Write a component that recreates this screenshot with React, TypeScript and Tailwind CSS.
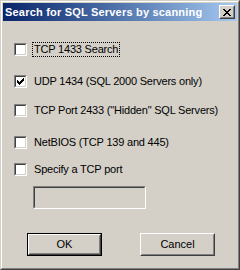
import React from "react";

const labels = [
  "TCP 1433 Search",
  "UDP 1434 (SQL 2000 Servers only)",
  "TCP Port 2433 (\"Hidden\" SQL Servers)",
  "NetBIOS (TCP 139 and 445)",
  "Specify a TCP port",
];

function CheckMark() {
  const px: [number, number][] = [
    [6, 0],
    [5, 1], [6, 1],
    [0, 2], [4, 2], [5, 2], [6, 2],
    [0, 3], [1, 3], [3, 3], [4, 3], [5, 3],
    [0, 4], [1, 4], [2, 4], [3, 4], [4, 4],
    [1, 5], [2, 5], [3, 5],
    [2, 6],
  ];
  return (
    <svg width="7" height="7" viewBox="0 0 7 7" shapeRendering="crispEdges">
      {px.map(([x, y]) => (
        <rect key={`${x}-${y}`} x={x} y={y} width="1" height="1" fill="#000" />
      ))}
    </svg>
  );
}

function Checkbox({ checked }: { checked?: boolean }) {
  return (
    <div className="w-[13px] h-[13px] shrink-0 border border-t-[#808080] border-l-[#808080] border-b-white border-r-white">
      <div className="w-full h-full border border-t-[#404040] border-l-[#404040] border-b-[#d4d0c8] border-r-[#d4d0c8] bg-white flex items-center justify-center">
        {checked && <CheckMark />}
      </div>
    </div>
  );
}

function Row({ label, checked, focused, className }: { label: string; checked?: boolean; focused?: boolean; className: string }) {
  return (
    <div className={`flex items-center h-[13px] ml-[11px] ${className}`}>
      <Checkbox checked={checked} />
      <span
        className={`ml-[5px] px-[1px] leading-[13px] whitespace-nowrap tracking-[-0.2px] ${
          focused ? "border border-dotted border-black" : "border border-transparent"
        }`}
      >
        {label}
      </span>
    </div>
  );
}

function Button({ label, isDefault }: { label: string; isDefault?: boolean }) {
  return (
    <div className={`w-[75px] h-[23px] ${isDefault ? "border border-black" : ""}`}>
      <div className="w-full h-full border border-t-white border-l-white border-b-[#404040] border-r-[#404040]">
        <div className="w-full h-full border border-t-[#d4d0c8] border-l-[#d4d0c8] border-b-[#808080] border-r-[#808080] flex items-center justify-center">
          {label}
        </div>
      </div>
    </div>
  );
}

export default function App() {
  return (
    <div
      className="w-[240px] h-[270px] bg-[#d4d0c8] text-black text-[11px] border border-t-[#d4d0c8] border-l-[#d4d0c8] border-b-[#404040] border-r-[#404040]"
      style={{ fontFamily: '"Liberation Sans", Arial, sans-serif' }}
    >
      <div className="w-full h-full border border-t-white border-l-white border-b-[#808080] border-r-[#808080] p-[1px] flex flex-col">
        {/* Title bar */}
        <div className="h-[18px] shrink-0 flex items-center pl-[2px] pr-[2px] bg-gradient-to-r from-[#0a246a] to-[#a6caf0]">
          <span className="flex-1 text-white font-bold text-[11px] tracking-[0.2px] whitespace-nowrap">Search for SQL Servers by scanning</span>
          <div className="w-[16px] h-[14px] border border-t-white border-l-white border-b-[#404040] border-r-[#404040] bg-[#d4d0c8]">
            <div className="w-full h-full border border-t-[#d4d0c8] border-l-[#d4d0c8] border-b-[#808080] border-r-[#808080] flex items-center justify-center">
              <svg width="8" height="7" viewBox="0 0 8 7" shapeRendering="crispEdges">
                <path d="M0 0h2v1h-2zM6 0h2v1h-2zM1 1h2v1h-2zM5 1h2v1h-2zM2 2h4v1h-4zM3 3h2v1h-2zM2 4h4v1h-4zM1 5h2v1h-2zM5 5h2v1h-2zM0 6h2v1h-2zM6 6h2v1h-2z" fill="#000" />
              </svg>
            </div>
          </div>
        </div>

        {/* Body */}
        <div className="flex-1 flex flex-col">
          <Row label={labels[0]} focused className="mt-[22px]" />
          <Row label={labels[1]} checked className="mt-[19px]" />
          <Row label={labels[2]} className="mt-[16px]" />
          <Row label={labels[3]} className="mt-[19px]" />
          <Row label={labels[4]} className="mt-[14px]" />

          <div className="ml-[30px] mt-[10px] w-[113px] h-[23px] border border-t-[#808080] border-l-[#808080] border-b-white border-r-white">
            <div className="w-full h-full border border-t-[#404040] border-l-[#404040] border-b-[#d4d0c8] border-r-[#d4d0c8] bg-[#d4d0c8]" />
          </div>

          <div className="mt-[24px] ml-[24px] flex gap-[38px]">
            <Button label="OK" isDefault />
            <Button label="Cancel" />
          </div>
        </div>
      </div>
    </div>
  );
}
